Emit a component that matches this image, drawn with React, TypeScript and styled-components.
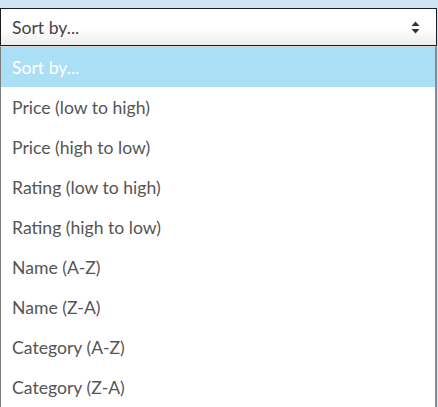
import React from "react";
import styled, { createGlobalStyle } from "styled-components";

const Global = createGlobalStyle`
  html, body { margin: 0; padding: 0; }
  body {
    background: #cfe4f6;
    font-family: Lato, "Noto Sans", sans-serif;
    overflow: hidden;
  }
`;

const Page = styled.div`
  padding-top: 8px;
  width: 438px;
  height: 407px;
  box-sizing: border-box;
`;

const SelectBox = styled.div`
  box-sizing: border-box;
  width: 437px;
  height: 38px;
  border: 1.5px solid #1c1c1c;
  background: linear-gradient(to bottom, #ffffff 55%, #ededed 100%);
  display: flex;
  align-items: center;
  justify-content: space-between;
  padding: 0 12px 0 11px;
  font-size: 17.6px;
  color: #444;
`;

const Arrows = styled.svg`
  width: 9px;
  height: 13px;
  margin-right: 4px;
`;

const List = styled.div`
  box-sizing: border-box;
  width: 437px;
  border-left: 1px solid #7a7a7a;
  border-right: 2px solid #8a8a8a;
  border-top: 1px solid #d8d8d8;
  background: #fff;
  display: flex;
  flex-direction: column;
`;

const Option = styled.div<{ $selected?: boolean }>`
  height: 40px;
  display: flex;
  align-items: center;
  padding-left: 11px;
  font-size: 17.6px;
  color: ${(p) => (p.$selected ? "#ffffff" : "#555")};
  background: ${(p) => (p.$selected ? "#abdff5" : "#fff")};
`;

const options = [
  "Sort by...",
  "Price (low to high)",
  "Price (high to low)",
  "Rating (low to high)",
  "Rating (high to low)",
  "Name (A-Z)",
  "Name (Z-A)",
  "Category (A-Z)",
  "Category (Z-A)",
];

export default function App() {
  return (
    <>
      <Global />
      <Page>
        <SelectBox>
          <span>Sort by...</span>
          <Arrows viewBox="0 0 9 13">
            <path d="M4.5 0.5 L8.5 5 L0.5 5 Z" fill="#333" />
            <path d="M0.5 8 L8.5 8 L4.5 12.5 Z" fill="#333" />
          </Arrows>
        </SelectBox>
        <List>
          {options.map((o, i) => (
            <Option key={o} $selected={i === 0}>
              {o}
            </Option>
          ))}
        </List>
      </Page>
    </>
  );
}
